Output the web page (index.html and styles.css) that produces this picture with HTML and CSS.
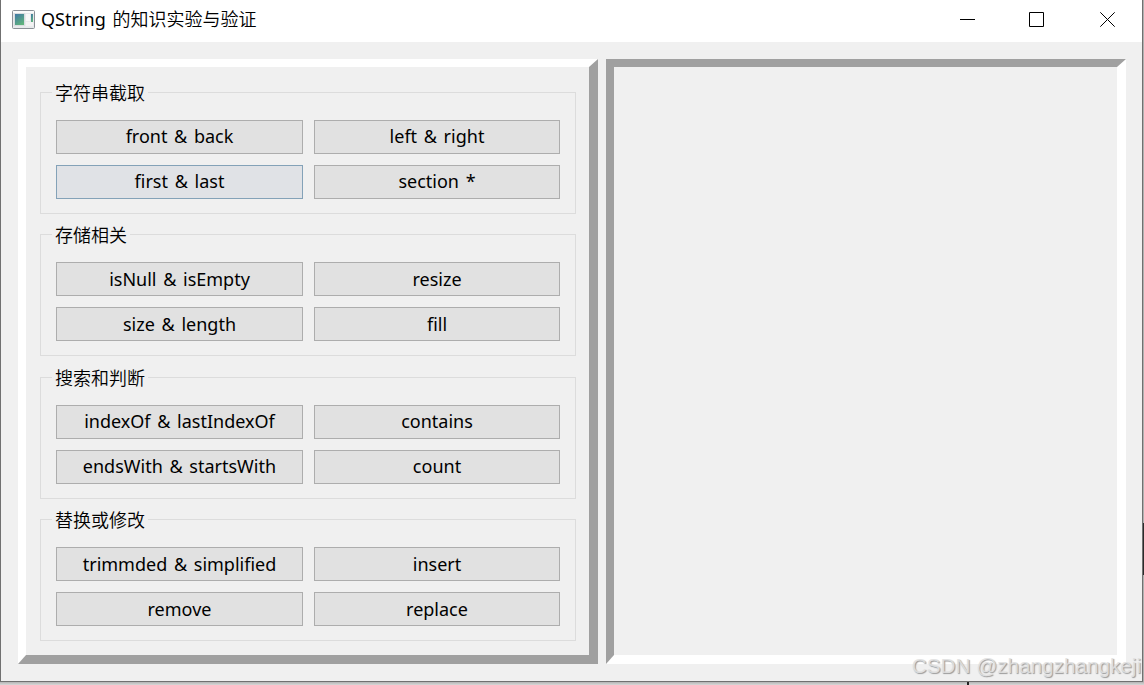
FILE: index.html
```html
<!DOCTYPE html>
<html lang="zh-CN">

<head>
    <meta charset="UTF-8">
    <meta name="viewport" content="width=device-width, initial-scale=1.0">
    <title>QString 的知识实验与验证</title>
    <link rel="stylesheet" href="styles.css">
</head>

<body>
    <div class="window">
        <div class="titlebar">
            <svg class="app-icon" width="23" height="19" viewBox="0 0 23 19">
                <defs>
                    <linearGradient id="screen" x1="0" y1="0" x2="0.6" y2="1">
                        <stop offset="0" stop-color="#3f74a8"/>
                        <stop offset="1" stop-color="#5fb37c"/>
                    </linearGradient>
                </defs>
                <rect x="0.5" y="0.5" width="22" height="18" rx="1" fill="#e8eaec" stroke="#8b9097"/>
                <rect x="1" y="1" width="21" height="2" fill="#fafafa"/>
                <rect x="2.5" y="3.5" width="10" height="12" fill="url(#screen)" stroke="#d9dde0"/>
                <rect x="14" y="4" width="4" height="7" fill="#f8f8f8"/>
                <rect x="19" y="4" width="2" height="8" fill="url(#screen)"/>
                <rect x="14" y="12" width="7" height="4" fill="#f3f3f3"/>
            </svg>
            <span class="title">QString <span class="cjk">的知识实验与验证</span></span>
            <div class="controls">
                <svg width="15" height="15" viewBox="0 0 15 15"><path d="M0 7.5H15"/></svg>
                <svg width="15" height="15" viewBox="0 0 15 15"><path d="M0.5 0.5H14.5V14.5H0.5Z"/></svg>
                <svg width="15" height="15" viewBox="0 0 15 15"><path d="M0.3 0.3L14.7 14.7M14.7 0.3L0.3 14.7"/></svg>
            </div>
        </div>
        <div class="content">
            <div class="frame raised">
                <section class="group">
                    <h2>字符串截取</h2>
                    <div class="buttons">
                        <button>front &amp; back</button>
                        <button>left &amp; right</button>
                        <button class="focused">first &amp; last</button>
                        <button>section *</button>
                    </div>
                </section>
                <section class="group low">
                    <h2>存储相关</h2>
                    <div class="buttons">
                        <button>isNull &amp; isEmpty</button>
                        <button>resize</button>
                        <button>size &amp; length</button>
                        <button>fill</button>
                    </div>
                </section>
                <section class="group">
                    <h2>搜索和判断</h2>
                    <div class="buttons">
                        <button>indexOf &amp; lastIndexOf</button>
                        <button>contains</button>
                        <button>endsWith &amp; startsWith</button>
                        <button>count</button>
                    </div>
                </section>
                <section class="group low">
                    <h2>替换或修改</h2>
                    <div class="buttons">
                        <button>trimmded &amp; simplified</button>
                        <button>insert</button>
                        <button>remove</button>
                        <button>replace</button>
                    </div>
                </section>
            </div>
            <div class="frame sunken"></div>
        </div>
    </div>
    <div class="watermark">CSDN @zhangzhangkeji</div>
</body>
</html>
```
FILE: styles.css
```css
* {
    box-sizing: border-box;
}

body {
    margin: 0;
    width: 1144px;
    height: 685px;
    overflow: hidden;
    position: relative;
    font-family: "Noto Sans", "Noto Sans CJK SC", sans-serif;
    font-size: 18px;
    color: #000;
    background:
        linear-gradient(#222, #222) 967px 682px / 2px 3px no-repeat,
        linear-gradient(#2b2b2b, #2b2b2b) 1143px 523px / 1px 52px no-repeat,
        linear-gradient(#b4b4b4, #d8d8d8) 0 682px / 100% 3px no-repeat,
        #b0b0b0;
}

.window {
    display: flex;
    flex-direction: column;
    width: 1143px;
    height: 682px;
    border: 1px solid #707070;
    border-top: none;
    background: #f0f0f0;
}

.titlebar {
    display: flex;
    align-items: center;
    height: 42px;
    padding: 0 27px 4px 11px;
    background: #fff;
}

.title {
    margin: -2px 0 0 6px;
    line-height: 24px;
    white-space: pre;
    word-spacing: 2px;
}

.cjk {
    font-family: "Noto Sans CJK SC DemiLight", "Noto Sans CJK SC", sans-serif;
    font-weight: 400;
}

.controls {
    display: flex;
    gap: 55px;
    margin-left: auto;
}

.controls svg {
    fill: none;
    stroke: #000;
    stroke-width: 1;
}

.controls svg:nth-child(2) {
    margin: 0 1px 0 -1px;
}

.content {
    display: flex;
    gap: 8px;
    flex: 1;
    padding: 17px 16px 17px 17px;
}

.frame {
    border-style: solid;
    border-width: 8px 9px 9px 8px;
}

.raised {
    width: 580px;
    display: grid;
    grid-template-rows: 142px 143px 142px 122px;
    padding: 25px 13px 0 14px;
    border-color: #fff #a0a0a0 #a0a0a0 #fff;
}

.sunken {
    flex: 1;
    border-color: #a0a0a0 #fff #fff #a0a0a0;
}

.group {
    height: 122px;
    padding: 0 15px;
    border: 1px solid #dcdcdc;
}

.group h2 {
    width: fit-content;
    height: 24px;
    margin: -13px 0 16px -4px;
    padding: 0 3px;
    background: #f0f0f0;
    font-family: "Noto Sans CJK SC DemiLight", "Noto Sans CJK SC", sans-serif;
    font-size: 18px;
    font-weight: 400;
    line-height: 24px;
}

.buttons {
    display: grid;
    grid-template-columns: 247px 246px;
    gap: 11px;
}

.buttons button {
    height: 34px;
    padding: 0 0 2px;
    border: 1px solid #adadad;
    background: #e1e1e1;
    color: #000;
    font-family: "Noto Sans", sans-serif;
    font-size: 18px;
    line-height: 24px;
    word-spacing: 2px;
}

.low button {
    padding-bottom: 0;
}

.buttons .focused {
    border-color: #84a2b8;
    background: #e0e2e6;
}

.watermark {
    position: absolute;
    right: 3px;
    bottom: 6px;
    font-family: "Liberation Sans", Arial, sans-serif;
    font-size: 20.7px;
    line-height: 26px;
    color: rgba(225, 225, 225, 0.9);
    text-shadow: 1px 1px 1px #999;
}
```
